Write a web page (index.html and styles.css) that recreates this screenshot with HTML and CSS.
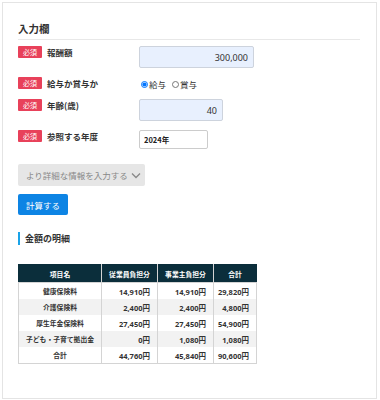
FILE: index.html
```html
<!DOCTYPE html>
<html lang="ja">
<head>
  <meta charset="UTF-8" />
  <meta name="viewport" content="width=device-width, initial-scale=1.0"/>
  <title>社会保険料計算</title>
  <link rel="stylesheet" href="styles.css">
</head>
<body>

<div class="card">
  <h2 class="section-title">入力欄</h2>

  <div class="form-row">
    <div class="form-label"><span class="required">必須</span>報酬額</div>
    <input class="num-input wide" type="text" value="300,000">
  </div>
  <div class="form-row">
    <div class="form-label"><span class="required">必須</span>給与か賞与か</div>
    <div class="radios">
      <label><input type="radio" name="kind" checked>給与</label>
      <label><input type="radio" name="kind">賞与</label>
    </div>
  </div>
  <div class="form-row">
    <div class="form-label"><span class="required">必須</span>年齢(歳)</div>
    <input class="num-input short" type="text" value="40">
  </div>
  <div class="form-row">
    <div class="form-label"><span class="required">必須</span>参照する年度</div>
    <select class="year-select">
      <option>2024年</option>
      <option>2023年</option>
    </select>
  </div>

  <button class="more-btn">より詳細な情報を入力する
    <svg width="10" height="7" viewBox="0 0 10 7"><path d="M1 1.5 L5 5.5 L9 1.5" fill="none" stroke="#888" stroke-width="1.3"/></svg>
  </button>
  <button class="calc-btn">計算する</button>

  <h3 class="sub-title">金額の明細</h3>

  <table class="detail">
    <thead>
      <tr><th>項目名</th><th>従業員負担分</th><th>事業主負担分</th><th>合計</th></tr>
    </thead>
    <tbody>
      <tr><td>健康保険料</td><td>14,910円</td><td>14,910円</td><td>29,820円</td></tr>
      <tr><td>介護保険料</td><td>2,400円</td><td>2,400円</td><td>4,800円</td></tr>
      <tr><td>厚生年金保険料</td><td>27,450円</td><td>27,450円</td><td>54,900円</td></tr>
      <tr><td>子ども・子育て拠出金</td><td>0円</td><td>1,080円</td><td>1,080円</td></tr>
      <tr><td>合計</td><td>44,760円</td><td>45,840円</td><td>90,600円</td></tr>
    </tbody>
  </table>
</div>

</body>
</html>
```

FILE: styles.css
```css
body {
  font-family: "Noto Sans CJK JP", "Noto Sans", sans-serif;
  background: #fff;
  color: #333;
  margin: 2px;
}
.card {
  width: 342px;
  height: 395px;
  border: 1px solid #e4e4e4;
  padding: 0 16px 0 15px;
  box-sizing: content-box;
}
.section-title {
  font-size: 10.5px;
  font-weight: bold;
  margin: 0 0 6px;
  padding: 19px 0 4px;
  border-bottom: 1px solid #e8e8e8;
  line-height: 13px;
}
.form-row {
  display: flex;
  align-items: flex-start;
  margin-bottom: 9px;
}
.form-label {
  width: 121px;
  display: flex;
  align-items: center;
  font-size: 8.5px;
  font-weight: bold;
  line-height: 12px;
}
.required {
  display: inline-block;
  width: 24px;
  height: 12px;
  line-height: 12px;
  background: #e8415a;
  color: #fff;
  font-size: 7px;
  font-weight: normal;
  text-align: center;
  border-radius: 1px;
  margin-right: 5px;
}
.num-input {
  height: 22px;
  box-sizing: border-box;
  background: #e8f0fe;
  border: 1px solid #cdd3dd;
  border-radius: 2px;
  text-align: right;
  padding: 0 5px;
  font-family: "Noto Sans", sans-serif;
  font-size: 9px;
  color: #333;
}
.wide { width: 115px; }
.short { width: 84px; }
.radios {
  display: flex;
  gap: 4px;
  font-size: 8.5px;
  line-height: 12px;
  padding-top: 1px;
}
.radios label {
  display: flex;
  align-items: center;
}
.radios input {
  width: 7px;
  height: 7px;
  margin: 0 1px 0 2px;
}
.year-select {
  width: 69px;
  height: 19px;
  appearance: none;
  border: 1px solid #ccc;
  border-radius: 2px;
  background: #fff;
  font-family: "Noto Sans CJK JP", sans-serif;
  font-size: 7.5px;
  font-weight: bold;
  color: #222;
  padding: 0 4px;
}
.more-btn {
  display: flex;
  align-items: center;
  gap: 3px;
  margin-top: 15px;
  height: 22px;
  padding: 0 4px 0 8px;
  background: #e6e6e6;
  border: none;
  border-radius: 2px;
  color: #888;
  font-family: "Noto Sans CJK JP", sans-serif;
  font-size: 8.5px;
}
.calc-btn {
  display: block;
  margin-top: 8px;
  height: 21px;
  width: 50px;
  background: #0d84e4;
  border: none;
  border-radius: 2px;
  color: #fff;
  font-family: "Noto Sans CJK JP", sans-serif;
  font-size: 8.5px;
}
.sub-title {
  margin: 17px 0 19px;
  padding-left: 5px;
  border-left: 2px solid #1aa3e8;
  font-size: 9px;
  font-weight: bold;
  line-height: 13px;
}
.detail {
  width: 239px;
  table-layout: fixed;
  border-collapse: collapse;
  font-size: 6.8px;
  font-weight: bold;
  color: #333;
}
.detail th {
  background: #0b2e3b;
  color: #fff;
  height: 17px;
  padding: 0;
  border: 1px solid #d4d4d4;
  border-top-color: #0b2e3b;
}
.detail th:first-child { width: 82px; border-left-color: #0b2e3b; }
.detail th:nth-child(2),
.detail th:nth-child(3) { width: 55px; }
.detail th:last-child { border-right-color: #0b2e3b; }
.detail td {
  height: 16px;
  padding: 0 7px 0 0;
  border: 1px solid #d4d4d4;
  border-top: none;
  border-bottom: none;
  text-align: right;
  font-family: "Noto Sans", "Noto Sans CJK JP", sans-serif;
  font-size: 7.5px;
}
.detail td:first-child {
  text-align: center;
  padding: 0;
  font-family: "Noto Sans CJK JP", sans-serif;
  font-size: 6.8px;
}
.detail tbody tr:nth-child(even) { background: #f2f2f2; }
.detail tbody tr:last-child td { border-bottom: 1px solid #d4d4d4; }
```
